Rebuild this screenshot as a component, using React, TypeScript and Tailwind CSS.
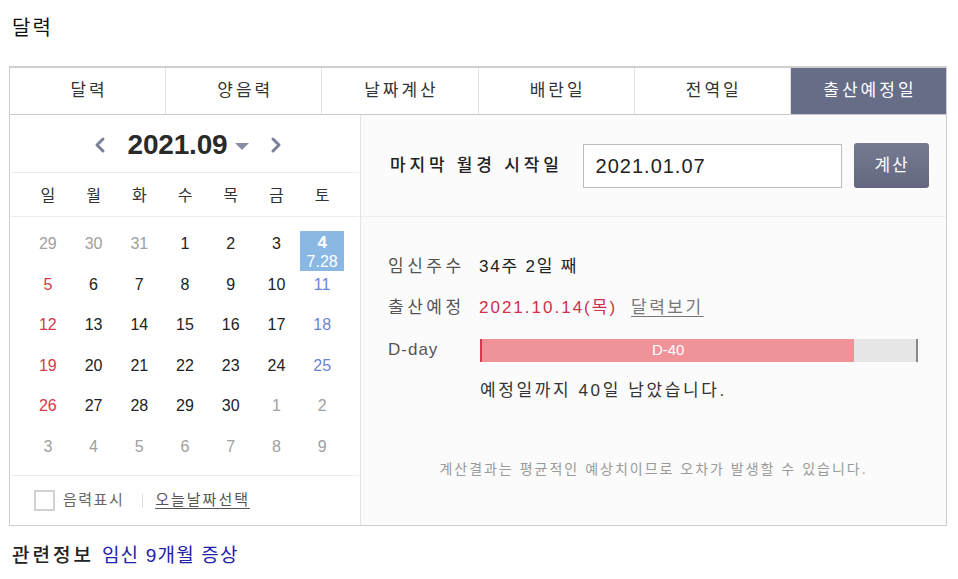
import { ChevronLeft, ChevronRight } from "lucide-react";

const tabs = ["달력", "양음력", "날짜계산", "배란일", "전역일", "출산예정일"];
const weekdays = ["일", "월", "화", "수", "목", "금", "토"];

// [day, kind] kind: o = other month, n = normal, s = sunday, t = saturday
const weeks: [string, string][][] = [
  [["29", "o"], ["30", "o"], ["31", "o"], ["1", "n"], ["2", "n"], ["3", "n"], ["4", "sel"]],
  [["5", "s"], ["6", "n"], ["7", "n"], ["8", "n"], ["9", "n"], ["10", "n"], ["11", "t"]],
  [["12", "s"], ["13", "n"], ["14", "n"], ["15", "n"], ["16", "n"], ["17", "n"], ["18", "t"]],
  [["19", "s"], ["20", "n"], ["21", "n"], ["22", "n"], ["23", "n"], ["24", "n"], ["25", "t"]],
  [["26", "s"], ["27", "n"], ["28", "n"], ["29", "n"], ["30", "n"], ["1", "o"], ["2", "o"]],
  [["3", "o"], ["4", "o"], ["5", "o"], ["6", "o"], ["7", "o"], ["8", "o"], ["9", "o"]],
];

const dayColor: Record<string, string> = {
  o: "text-[#a0a0a0]",
  n: "text-[#222]",
  s: "text-[#d23a4c]",
  t: "text-[#6a85d3]",
};

export default function App() {
  return (
    <div className="w-[958px] h-[579px] bg-white font-[Liberation_Sans,Noto_Sans_CJK_KR,sans-serif] text-[#222] overflow-hidden">
      <h1 className="pl-[12px] pt-[14px] h-[66px] text-[20px] tracking-[2px] leading-[28px] text-[#111]">달력</h1>

      <div className="ml-[9px] w-[938px] border-t-2 border-x border-b border-[#cfcfcf]">
        {/* tabs */}
        <div className="flex h-[47px] border-b border-[#c9c9c9]">
          {tabs.map((t, i) => (
            <div
              key={t}
              className={
                i === tabs.length - 1
                  ? "flex-1 flex items-center justify-center bg-[#676c87] text-white text-[17px] tracking-[3px] pl-[3px]"
                  : "flex-1 flex items-center justify-center border-r border-[#e2e2e2] text-[#333] text-[17px] tracking-[3px] pl-[3px]"
              }
            >
              {t}
            </div>
          ))}
        </div>

        <div className="flex h-[410px]">
          {/* calendar */}
          <div className="w-[350px] px-[1px] flex flex-col">
            <div className="h-[58px] flex items-center justify-center pl-[6px] pt-[3px] border-b border-[#ececec]">
              <ChevronLeft className="w-[24px] h-[24px] text-[#7b8099]" strokeWidth={3} />
              <span className="ml-[16px] font-bold text-[28px] tracking-[-0.2px] text-[#2a2a2a] font-[Liberation_Sans,sans-serif]">2021.09</span>
              <span className="ml-[8px] w-0 h-0 border-x-[7px] border-x-transparent border-t-[7px] border-t-[#8a8ea5] mt-[2px]"></span>
              <ChevronRight className="ml-[15px] w-[24px] h-[24px] text-[#7b8099]" strokeWidth={3} />
            </div>

            <div className="h-[44px] grid grid-cols-7 px-[14px] pt-[3px] items-center border-b border-[#ececec] text-[16px] text-[#333]">
              {weekdays.map((w) => (
                <div key={w} className="text-center">{w}</div>
              ))}
            </div>

            <div className="pt-[14px] px-[14px] h-[259px] border-b border-[#ececec]">
              {weeks.map((week, r) => (
                <div key={r} className="grid grid-cols-7 h-[40.6px]">
                  {week.map(([d, k], c) =>
                    k === "sel" ? (
                      <div key={c} className="flex justify-center">
                        <div className="w-[44px] h-[40px] bg-[#8ab8e3] text-white flex flex-col items-center leading-[19px] pt-[2px]">
                          <span className="font-bold text-[17px]">4</span>
                          <span className="text-[16px]">7.28</span>
                        </div>
                      </div>
                    ) : (
                      <div key={c} className={`text-center text-[16px] leading-[22px] pt-[2px] ${dayColor[k]}`}>{d}</div>
                    )
                  )}
                </div>
              ))}
            </div>

            <div className="flex-1 flex items-center pl-[23px] text-[15px] text-[#666]">
              <span className="w-[21px] h-[21px] border-2 border-[#d2d2d2] bg-white mr-[8px]"></span>
              <span className="tracking-[1.5px]">음력표시</span>
              <span className="ml-[18px] mr-[12px] w-px h-[14px] bg-[#dcdcdc]"></span>
              <span className="underline underline-offset-[3px] text-[#555] tracking-[2px]">오늘날짜선택</span>
            </div>
          </div>

          {/* result */}
          <div className="flex-1 bg-[#fbfbfb] border-l border-[#e3e3e3] flex flex-col">
            <div className="h-[102px] flex items-center pl-[29px] border-b border-[#efefef]">
              <span className="text-[17px] font-medium text-[#222] tracking-[3.8px] mr-[20px]">마지막 월경 시작일</span>
              <div className="w-[259px] h-[44px] border border-[#bdbdbd] bg-white flex items-center pl-[12px] text-[20px] tracking-[1px] text-[#222]">
                2021.01.07
              </div>
              <button className="ml-[12px] w-[75px] h-[45px] rounded-[3px] bg-gradient-to-b from-[#767a93] to-[#63677f] text-white text-[17px] tracking-[2px] pl-[2px]">
                계산
              </button>
            </div>

            <div className="pl-[27px] pt-[38px] text-[17px]">
              <div className="flex items-center h-[24px]">
                <span className="w-[91px] text-[#555] tracking-[3.5px]">임신주수</span>
                <span className="text-[#222] tracking-[1.8px]">34주 2일 째</span>
              </div>
              <div className="flex items-center h-[24px] mt-[17px]">
                <span className="w-[91px] text-[#555] tracking-[3.5px]">출산예정</span>
                <span className="text-[#d0304a] tracking-[2px]">2021.10.14(목)</span>
                <span className="ml-[14px] underline underline-offset-[3px] text-[#777] tracking-[2.5px]">달력보기</span>
              </div>
              <div className="flex items-center h-[24px] mt-[18px]">
                <span className="w-[92px] text-[#555] tracking-[1px]">D-day</span>
                <div className="w-[438px] h-[23px] bg-[#e6e6e6] flex border-l-2 border-[#d9394a] border-r-2 border-r-[#888]">
                  <div className="w-[85.8%] bg-[#f09399] text-white text-[15px] flex items-center justify-center">D-40</div>
                </div>
              </div>
              <div className="pl-[92px] mt-[16px] h-[24px] text-[#333] tracking-[2.6px]">예정일까지 40일 남았습니다.</div>
            </div>

            <div className="mt-[57px] text-center text-[14px] tracking-[2px] text-[#9a9a9a]">
              계산결과는 평균적인 예상치이므로 오차가 발생할 수 있습니다.
            </div>
          </div>
        </div>
      </div>

      <div className="pl-[12px] pt-[16px] text-[19px]">
        <span className="font-medium text-[#222] tracking-[3px]">관련정보</span>
        <span className="ml-[8px] text-[#2222aa] tracking-[1.2px]">임신 9개월 증상</span>
      </div>
    </div>
  );
}
